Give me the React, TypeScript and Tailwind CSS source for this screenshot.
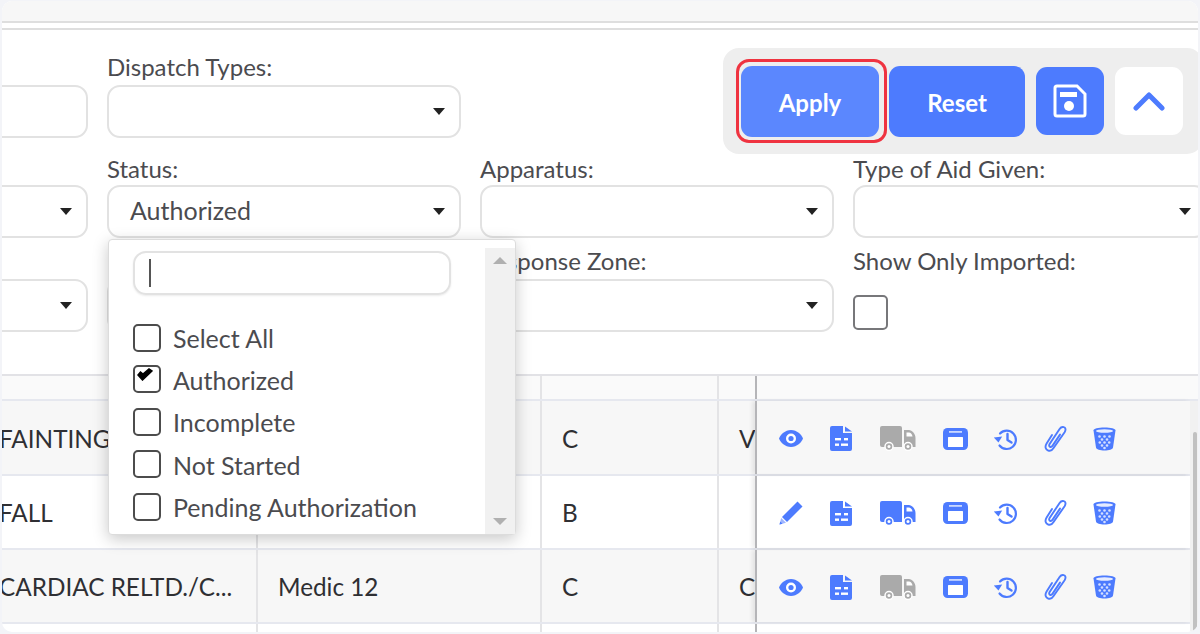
const BLUE = "#4d7bfe";

function Caret() {
  return <span className="absolute right-[14px] top-[21px] h-0 w-0 border-x-[6px] border-t-[7px] border-x-transparent border-t-[#222]" />;
}

function Select({ value, caret = true }: { value?: string; caret?: boolean }) {
  return (
    <div className="relative h-[53px] rounded-[13px] border-2 border-[#e2e2e2] bg-white pl-[21px] text-[25px] leading-[46px]">
      {value}
      {caret && <Caret />}
    </div>
  );
}

function Field({ label, width = "w-[354px]", labelClass = "h-[32px] leading-[32px]", children }: { label?: string; width?: string; labelClass?: string; children: React.ReactNode }) {
  return (
    <div className={`shrink-0 ${width}`}>
      <div className={`whitespace-nowrap ${labelClass}`}>{label}</div>
      {children}
    </div>
  );
}

function SaveIcon() {
  return (
    <svg width="36" height="36" viewBox="0 0 36 36" fill="none">
      <path d="M3 5a2 2 0 0 1 2-2h20l8 8v20a2 2 0 0 1-2 2H5a2 2 0 0 1-2-2z" stroke="#fff" strokeWidth="3" />
      <rect x="8" y="9" width="17" height="5" fill="#fff" />
      <circle cx="17" cy="23" r="5" fill="#fff" />
    </svg>
  );
}

function EyeIcon() {
  return (
    <svg width="24" height="17" viewBox="0 0 24 17">
      <path d="M12 0C18 0 22.500 4.500 24 8.500 22.500 12.500 18 17 12 17S1.500 12.500 0 8.500C1.500 4.500 6 0 12 0z" fill={BLUE} />
      <circle cx="12" cy="8.500" r="5" fill="#fff" />
      <circle cx="12" cy="8.500" r="2.600" fill={BLUE} />
    </svg>
  );
}

function PencilIcon() {
  return (
    <svg width="24" height="24" viewBox="0 0 24 24">
      <path d="M18.500 0.500 L23.500 5.500 L8 21 L3 16z" fill={BLUE} />
      <path d="M2.200 17 L7 21.800 L0.500 23.500z" fill="#9fb6ff" />
      <path d="M1.200 20.500 L3.500 22.800 L0.500 23.500z" fill={BLUE} />
    </svg>
  );
}

function DocIcon() {
  return (
    <svg width="22" height="25" viewBox="0 0 22 25">
      <path d="M2 0h11v7h9v16a2 2 0 0 1-2 2H2a2 2 0 0 1-2-2V2a2 2 0 0 1 2-2z" fill={BLUE} />
      <path d="M15 0.500 L22 5.500 H15z" fill={BLUE} />
      <rect x="5" y="12" width="6" height="2.400" fill="#fff" />
      <rect x="5" y="17.500" width="4" height="2.400" fill="#fff" />
      <rect x="11" y="17.500" width="7" height="2.400" fill="#fff" />
      <rect x="14" y="12" width="4" height="2.400" fill="#fff" />
    </svg>
  );
}

function TruckIcon({ color }: { color: string }) {
  return (
    <svg width="36" height="25" viewBox="0 0 36 25">
      <path d="M2 0h18a2 2 0 0 1 2 2v19H2a2 2 0 0 1-2-2V2a2 2 0 0 1 2-2z" fill={color} />
      <path d="M24 4h5c3 0 6.500 4 6.500 8v9H24z" fill={color} />
      <path d="M26.500 6.500h2.500c1.500 0 3 1.500 3.500 4h-6z" fill="#fff" />
      <circle cx="9" cy="20.500" r="4" fill={color} stroke="#fff" strokeWidth="1.500" />
      <circle cx="9" cy="20.500" r="1.500" fill="#fff" />
      <circle cx="28" cy="20.500" r="4" fill={color} stroke="#fff" strokeWidth="1.500" />
      <circle cx="28" cy="20.500" r="1.500" fill="#fff" />
    </svg>
  );
}

function PrintIcon() {
  return (
    <svg width="25" height="22" viewBox="0 0 25 22">
      <rect x="0" y="0" width="25" height="22" rx="4.500" fill={BLUE} />
      <rect x="6" y="3" width="13" height="1.800" fill="#c9d7ff" />
      <rect x="5" y="9" width="15" height="10" rx="0.500" fill="#fff" />
    </svg>
  );
}

function HistoryIcon() {
  return (
    <svg width="24" height="24" viewBox="0 0 24 24" fill="none">
      <path d="M6 6.500A9.200 9.200 0 1 1 5.500 18.500" stroke={BLUE} strokeWidth="2.200" strokeLinecap="round" />
      <path d="M0 10 L8.500 10 L4 15.500z" fill={BLUE} transform="rotate(-8 4 12)" />
      <path d="M13.500 7v6l4 2.500" stroke={BLUE} strokeWidth="2.400" strokeLinecap="round" strokeLinejoin="round" />
    </svg>
  );
}

function ClipIcon() {
  return (
    <svg width="24" height="26" viewBox="0 0 24 26" fill="none" stroke={BLUE} strokeWidth="1.900" strokeLinecap="round">
      <path d="M8 9 L2.600 17.500 c-2.200 3.600-.6 6 1.200 6.800 2 .9 4.200.2 5.600-2 L20.600 6.200 c1.800-2.800.6-4.600-.8-5-1.600-.5-3 0-4.200 1.800 L5.600 18 c-.8 1.400-.4 2.400.4 2.800 .9.4 1.800 0 2.600-1.200 L16 8.600" />
    </svg>
  );
}

function TrashIcon() {
  return (
    <svg width="23" height="24" viewBox="0 0 23 24">
      <path d="M0.500 3.500C0.500 1.500 5 .5 11.500.5S22.500 1.500 22.500 3.500L20 20.500c-.3 2-4 3-8.500 3S3.300 22.500 3 20.500z" fill={BLUE} />
      <ellipse cx="11.500" cy="4" rx="8.500" ry="1.800" fill="#e6ecff" />
      {[[6.500, 9.500], [11.500, 9.500], [16.500, 9.500], [9, 12.500], [14, 12.500], [6.800, 15.500], [11.500, 15.500], [16.200, 15.500], [9, 18.500], [14, 18.500], [11.500, 21]].map(([cx, cy]) => (
        <circle key={`${cx}-${cy}`} cx={cx} cy={cy} r="1.300" fill="#d5dfff" />
      ))}
    </svg>
  );
}

function Actions({ active }: { active: boolean }) {
  return (
    <div className="flex h-full items-center pl-[22px] pt-[2px]">
      <span className="flex w-[51px]">{active ? <PencilIcon /> : <EyeIcon />}</span>
      <span className="flex w-[50px]"><DocIcon /></span>
      <span className="flex w-[63px]"><TruckIcon color={active ? BLUE : "#aaaaaa"} /></span>
      <span className="flex w-[51px]"><PrintIcon /></span>
      <span className="flex w-[50px]"><HistoryIcon /></span>
      <span className="flex w-[49px]"><ClipIcon /></span>
      <TrashIcon />
    </div>
  );
}

function Row({ a, b, c, d, active, h = "h-[74px]" }: { a: string; b?: string; c: string; d?: string; active: boolean; h?: string }) {
  return (
    <div className={`grid grid-cols-[254px_284px_177px_38px_435px] border-b-2 border-[#e6e8ef] text-[24.3px] text-[#2f2f33] ${h} ${active ? "bg-white" : "bg-[#f7f7f7]"}`}>
      <div className="flex items-center overflow-hidden whitespace-nowrap pt-[3px]">
        <span className="-ml-[3px]">{a}</span>
      </div>
      <div className="flex items-center border-l-2 border-[#e4e4e6] pl-[20px] pt-[3px]">{b}</div>
      <div className="flex items-center border-l-2 border-[#e4e4e6] pl-[20px] pt-[3px]">{c}</div>
      <div className="flex items-center overflow-hidden border-l-2 border-[#e4e4e6] pl-[20px] pt-[3px]">{d}</div>
      <div className="border-l-2 border-[#b5b5b8] shadow-[-3px_0_4px_rgba(0,0,0,0.08)]">
        <Actions active={active} />
      </div>
    </div>
  );
}

function Check({ label, checked, h = "h-[42.500px]" }: { label: string; checked?: boolean; h?: string }) {
  return (
    <div className={`flex items-center gap-[12px] ${h}`}>
      <span className="relative h-[28px] w-[28px] shrink-0 rounded-[5px] border-2 border-[#4c4c4c] bg-white">
        {checked && (
          <svg className="absolute left-[2px] top-[1px]" width="16" height="13" viewBox="0 0 16 13">
            <path d="M1 7 L5.500 12 L15 3 L12 1 L6 6 L3.500 4z" fill="#000" stroke="#000" strokeWidth="1.500" />
          </svg>
        )}
      </span>
      <span className="whitespace-nowrap pt-[2px]">{label}</span>
    </div>
  );
}

export default function App() {
  return (
    <div className="h-[634px] w-[1200px] overflow-hidden bg-[#f3f4f8] px-[2px] pt-[1px] font-['Lato',sans-serif] text-[24px] text-[#4b4b4f]">
      <div className="relative h-[631px] overflow-hidden rounded-[10px] bg-white">
        <div className="h-[22px] border-b-2 border-[#dedede] bg-[#f7f7f7]" />
        <div className="h-[7px] border-b-2 border-[#dedede]" />

        {/* filter panel */}
        <div className="h-[346px] overflow-hidden border-b-2 border-[#e2e2e6] pt-[18px]">
          <div className="-ml-[20px] flex h-[106px] gap-[19px]">
            <Field width="w-[106px]" labelClass="h-[37px]"><Select caret={false} /></Field>
            <Field label="Dispatch Types:" labelClass="h-[37px] pt-[3px] leading-[32px]"><Select /></Field>
            <div className="ml-[243px] flex h-[106px] w-[480px] shrink-0 items-center gap-[10px] rounded-[16px] bg-[#eeeeee] pl-[18px] text-white">
              <div className="relative">
                <button className="block h-[71px] w-[138px] rounded-[11px] bg-[#5b87fe] pt-[3px] font-bold">Apply</button>
                <span className="pointer-events-none absolute -top-[7px] -right-[8px] -bottom-[6px] -left-[5px] rounded-[13px] border-[3px] border-[#ef3340]" />
              </div>
              <button className="h-[71px] w-[136px] rounded-[11px] bg-[#4d7bfe] pt-[3px] font-bold">Reset</button>
              <button className="ml-[1px] flex h-[68px] w-[68px] items-center justify-center rounded-[11px] bg-[#4d7bfe]"><SaveIcon /></button>
              <button className="ml-[1px] flex h-[68px] w-[68px] items-center justify-center rounded-[11px] bg-white">
                <svg width="32" height="20" viewBox="0 0 32 20" fill="none" stroke="#4d7bfe" strokeWidth="5" strokeLinecap="round" strokeLinejoin="round"><path d="M3 17 L16 4 L29 17" /></svg>
              </button>
            </div>
          </div>
          <div className="-ml-[20px] -mt-[1px] flex gap-[19px]">
            <Field width="w-[106px]"><Select /></Field>
            <Field label="Status:"><Select value="Authorized" /></Field>
            <Field label="Apparatus:"><Select /></Field>
            <Field label="Type of Aid Given:"><Select /></Field>
          </div>
          <div className="-ml-[20px] mt-[10px] flex gap-[19px]">
            <Field width="w-[106px]" labelClass="h-[31px]"><Select /></Field>
            <Field labelClass="h-[31px]"><Select caret={false} /></Field>
            <Field label="Response Zone:" labelClass="h-[31px] leading-[26px]"><Select /></Field>
            <Field label="Show Only Imported:" labelClass="h-[31px] leading-[26px]">
              <div className="mt-[16px] h-[35px] w-[35px] rounded-[5px] border-2 border-[#77777a]" />
            </Field>
          </div>
        </div>

        {/* table */}
        <div>
          <div className="grid h-[25px] grid-cols-[254px_284px_177px_38px_443px] border-b-2 border-[#e6e8ef] bg-[#fafafa]">
            <div />
            <div className="border-l-2 border-[#e4e4e6]" />
            <div className="border-l-2 border-[#e4e4e6]" />
            <div className="border-l-2 border-[#e4e4e6]" />
            <div className="border-l-2 border-[#b5b5b8]" />
          </div>
          <div className="flex">
            <div className="w-[1188px]">
              <Row a="FAINTING" c="C" d="V" active={false} h="h-[75px]" />
              <Row a="FALL" c="B" active />
              <Row a="CARDIAC RELTD./C..." b="Medic 12" c="C" d="C" active={false} />
              <div className="grid h-[10px] grid-cols-[254px_284px_177px_38px_435px]">
                <div />
                <div className="border-l-2 border-[#e4e4e6]" />
                <div className="border-l-2 border-[#e4e4e6]" />
                <div className="border-l-2 border-[#e4e4e6]" />
                <div className="border-l-2 border-[#b5b5b8]" />
              </div>
            </div>
            <div className="w-[8px] bg-[#f1f1f1] pl-[3px] pt-[31px]">
              <div className="h-[200px] w-[4px] rounded-[3px] bg-[#c1c1c1]" />
            </div>
          </div>
        </div>

        {/* status dropdown */}
        <div className="absolute left-[106px] top-[238px] flex h-[296px] w-[408px] rounded-[4px] border border-[#dcdcdc] bg-white shadow-[0_4px_16px_rgba(0,0,0,0.22)] text-[25px]">
          <div className="w-[377px] pl-[24px] pt-[11px]">
            <div className="flex h-[44px] w-[318px] items-center rounded-[13px] border-2 border-[#e2e2e2] shadow-[0_1px_2px_rgba(0,0,0,0.08)]">
              <span className="ml-[14px] h-[28px] w-[2px] bg-[#555]" />
            </div>
            <div className="mt-[22px]">
              <Check label="Select All" h="h-[41px]" />
              <Check label="Authorized" checked />
              <Check label="Incomplete" />
              <Check label="Not Started" />
              <Check label="Pending Authorization" />
            </div>
          </div>
          <div className="mt-[8px] flex w-[30px] flex-col items-center justify-between bg-[#f1f1f1] py-[9px]">
            <span className="h-0 w-0 border-x-[7px] border-b-[7px] border-x-transparent border-b-[#b0b0b0]" />
            <span className="h-0 w-0 border-x-[7px] border-t-[7px] border-x-transparent border-t-[#b0b0b0]" />
          </div>
        </div>
      </div>
    </div>
  );
}
